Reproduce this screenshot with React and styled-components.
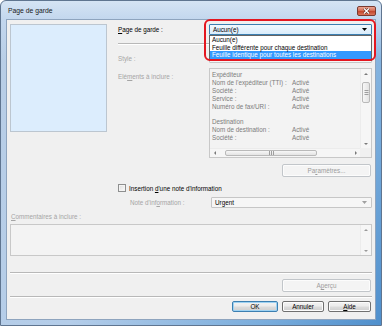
import styled, { createGlobalStyle } from 'styled-components';

const Global = createGlobalStyle`
  html, body { margin: 0; padding: 0; background: #fff; }
  body { font-family: "Liberation Sans", Arial, sans-serif; font-size: 6.3px; color: #000; }
  #root { width: 382px; height: 326px; overflow: hidden; }
`;

const Window = styled.div`
  box-sizing: border-box;
  width: 382px;
  height: 326px;
  display: flex;
  flex-direction: column;
  padding: 0 5px 5px;
  border: 1px solid #5f7590;
  border-radius: 6px 6px 0 0;
  background:
    linear-gradient(180deg, #d5e4f4 0px, #c3d7ee 18px, rgba(190, 212, 236, 0) 60px),
    linear-gradient(120deg, #b9cee6 0%, #b4cde9 45%, #78acdc 80%, #4f8fcc 100%);
`;

const TitleBar = styled.div`
  height: 18px;
  display: flex;
  align-items: center;
  justify-content: space-between;
  padding-left: 2px;
`;

const Title = styled.span`
  font-size: 6.8px;
  color: #1a1a1a;
`;

const CloseBtn = styled.div`
  width: 19px;
  height: 10px;
  margin-top: 2px;
  box-sizing: border-box;
  border: 1px solid #7a3a30;
  border-radius: 2px;
  background: linear-gradient(#eaa593, #d46a52 48%, #c2442c 52%, #d9745a);
  display: flex;
  align-items: center;
  justify-content: center;
`;

const Client = styled.div`
  flex: 1;
  box-sizing: border-box;
  background: #f0f0f0;
  border: 1px solid #8ea4be;
  padding: 4px 3px 0;
  display: flex;
  flex-direction: column;
`;

const Top = styled.div`
  display: grid;
  grid-template-columns: 97px 1fr;
  column-gap: 11px;
  align-items: start;
`;

const Preview = styled.div`
  height: 108px;
  box-sizing: border-box;
  background: #dcedfd;
  border: 1px solid #bcc6d0;
`;

const Form = styled.div`
  display: flex;
  flex-direction: column;
`;

const FieldRow = styled.div`
  display: grid;
  grid-template-columns: ${p => p.$col || 91}px 1fr;
  margin-top: ${p => p.$mt || 0}px;
`;

const Label = styled.span`
  color: ${p => (p.$disabled ? '#a5a5a5' : '#000')};
  padding-top: ${p => p.$pt ?? 2}px;
  padding-left: ${p => p.$pl || 0}px;
  line-height: 7px;
  white-space: nowrap;
`;

const Combo = styled.div`
  position: relative;
  height: 11px;
  box-sizing: border-box;
  display: flex;
  align-items: center;
  justify-content: space-between;
  padding: 0 4px 0 3px;
  border: 1px solid ${p => (p.$open ? '#3c7fb1' : '#c6c6c6')};
  border-radius: 1px;
  background: ${p => (p.$open ? 'linear-gradient(#f1f8fd, #d9ecfb)' : '#f6f6f6')};
  color: ${p => (p.$muted ? '#9a9a9a' : '#000')};
`;

const Popup = styled.ul`
  position: absolute;
  left: -1px;
  right: -1px;
  top: 10px;
  margin: 0;
  padding: 0 0 1px;
  list-style: none;
  background: #fff;
  border: 1px solid #646464;
  z-index: 2;
`;

const Option = styled.li`
  height: 7.7px;
  line-height: 7.7px;
  padding-left: 2px;
  white-space: nowrap;
  background: ${p => (p.$selected ? '#3399ff' : 'transparent')};
  color: ${p => (p.$selected ? '#fff' : '#000')};
`;

const Ring = styled.div`
  position: absolute;
  left: -6px;
  top: -6px;
  width: 172px;
  height: 42px;
  box-sizing: border-box;
  border: 2px solid #e4161f;
  border-radius: 6px;
  z-index: 3;
  pointer-events: none;
`;

const Separator = styled.div`
  height: 0;
  border-top: 1px solid #b8b8b8;
  border-bottom: 1px solid #fff;
  margin-top: ${p => p.$mt || 0}px;
`;

const ListBox = styled.div`
  height: ${p => p.$h}px;
  box-sizing: border-box;
  border: 1px solid #c8c8c8;
  background: #f3f3f3;
  display: grid;
  grid-template-columns: 1fr 11px;
  grid-template-rows: ${p => (p.$hbar ? '1fr 9px' : '1fr')};
  overflow: hidden;
`;

const ListContent = styled.div`
  padding: 2.4px 0 0 2px;
  overflow: hidden;
  color: #7c7c7c;
`;

const ListLine = styled.div`
  display: grid;
  grid-template-columns: 80px auto;
  height: 7.8px;
  line-height: 7.8px;
  white-space: nowrap;
`;

const VBar = styled.div`
  display: flex;
  flex-direction: column;
  background: #f6f6f6;
  border-left: 1px solid #ececec;
`;

const HBar = styled.div`
  display: flex;
  align-items: stretch;
  background: #f6f6f6;
  border-top: 1px solid #ececec;
`;

const ArrowCell = styled.div`
  flex: none;
  ${p => (p.$horizontal ? 'width: 9px;' : 'height: 9px;')}
  display: flex;
  align-items: center;
  justify-content: center;
`;

const Track = styled.div`
  flex: 1;
  display: flex;
  flex-direction: ${p => (p.$horizontal ? 'row' : 'column')};
`;

const Thumb = styled.div`
  flex: none;
  box-sizing: border-box;
  border: 1px solid #b9b9b9;
  border-radius: 2px;
  display: flex;
  align-items: center;
  justify-content: center;
  ${p =>
    p.$horizontal
      ? `margin: 1px 0 1px ${p.$offset}px; width: ${p.$len}px; background: linear-gradient(#f7f7f7, #e3e3e3);`
      : `margin: ${p.$offset}px 1px 0; height: ${p.$len}px; background: linear-gradient(90deg, #f7f7f7, #e3e3e3);`}
`;

const Corner = styled.div`
  background: #f0f0f0;
`;

const ButtonRow = styled.div`
  display: flex;
  justify-content: flex-end;
  gap: ${p => p.$gap || 0}px;
  margin-top: ${p => p.$mt || 0}px;
  padding-right: 1px;
`;

const Button = styled.div`
  width: ${p => p.$w}px;
  height: ${p => p.$h || 11}px;
  box-sizing: border-box;
  display: flex;
  align-items: center;
  justify-content: center;
  border-radius: 2px;
  border: 1px solid ${p => (p.$disabled ? '#c2c6ca' : p.$default ? '#3c7fb1' : '#707070')};
  background: ${p =>
    p.$disabled
      ? '#f4f4f4'
      : 'linear-gradient(#f3f3f3, #ebebeb 48%, #dddddd 52%, #cfcfcf)'};
  box-shadow: ${p => (p.$default ? 'inset 0 0 0 1px #9ed2f2' : 'inset 0 0 0 1px #fcfcfc')};
  color: ${p => (p.$disabled ? '#9c9c9c' : '#000')};
  white-space: nowrap;
`;

const CheckRow = styled.div`
  display: flex;
  align-items: center;
  gap: 3px;
  margin-top: 7px;
  height: 8px;
`;

const CheckBox = styled.span`
  width: 8px;
  height: 8px;
  box-sizing: border-box;
  border: 1px solid #8e8f8f;
  background: linear-gradient(135deg, #dcdcdc, #fdfdfd);
  box-shadow: inset 0 0 0 1px #f4f4f4;
`;

const Section = styled.div`
  margin-top: ${p => p.$mt || 0}px;
`;

const Text = styled.span`
  white-space: nowrap;
`;

const Tri = ({ dir = 'down', color = '#000', w = 5, h = 3 }) => {
  const vertical = dir === 'down' || dir === 'up';
  const W = vertical ? w : h;
  const H = vertical ? h : w;
  const pts = {
    down: `0,0 ${W},0 ${W / 2},${H}`,
    up: `0,${H} ${W},${H} ${W / 2},0`,
    left: `${W},0 ${W},${H} 0,${H / 2}`,
    right: `0,0 0,${H} ${W},${H / 2}`,
  }[dir];
  return (
    <svg width={W} height={H} viewBox={`0 0 ${W} ${H}`}>
      <polygon points={pts} fill={color} />
    </svg>
  );
};

const Grip = ({ horizontal }) =>
  horizontal ? (
    <svg width="5" height="4" viewBox="0 0 5 4">
      <path d="M0.5 0v4M2.5 0v4M4.5 0v4" stroke="#8a8a8a" strokeWidth="0.8" />
    </svg>
  ) : (
    <svg width="5" height="5" viewBox="0 0 5 5">
      <path d="M0.5 0.5h4M0.5 2.5h4M0.5 4.5h4" stroke="#8a8a8a" strokeWidth="0.8" />
    </svg>
  );

const U = styled.u`
  text-decoration: underline;
  text-underline-offset: 1px;
`;

const items = [
  ['Expéditeur', ''],
  ["Nom de l'expéditeur (TTI) :", 'Activé'],
  ['Société :', 'Activé'],
  ['Service :', 'Activé'],
  ['Numéro de fax/URI :', 'Activé'],
  ['', ''],
  ['Destination', ''],
  ['Nom de destination :', 'Activé'],
  ['Société :', 'Activé'],
];

const options = [
  'Aucun(e)',
  'Feuille différente pour chaque destination',
  'Feuille identique pour toutes les destinations',
];

function App() {
  return (
    <>
      <Global />
      <Window>
        <TitleBar>
          <Title>Page de garde</Title>
          <CloseBtn>
            <svg width="7" height="6" viewBox="0 0 7 6">
              <path d="M1 0.5L6 5.5M6 0.5L1 5.5" stroke="#5a2a22" strokeWidth="2.4" />
              <path d="M1 0.5L6 5.5M6 0.5L1 5.5" stroke="#fff" strokeWidth="1.3" />
            </svg>
          </CloseBtn>
        </TitleBar>
        <Client>
          <Top>
            <Preview />
            <Form>
              <FieldRow>
                <Label>
                  <U>P</U>age de garde :
                </Label>
                <Combo $open>
                  <Text>Aucun(e)</Text>
                  <Tri dir="down" />
                  <Popup>
                    {options.map((o, i) => (
                      <Option key={o} $selected={i === 2}>
                        {o}
                      </Option>
                    ))}
                  </Popup>
                  <Ring />
                </Combo>
              </FieldRow>
              <Separator $mt={8} />
              <FieldRow $mt={7}>
                <Label $disabled $pt={3}>
                  Style :
                </Label>
                <Combo $muted>
                  <Text />
                  <Tri dir="down" color="#a0a0a0" />
                </Combo>
              </FieldRow>
              <FieldRow $mt={5}>
                <Label $disabled $pt={5}>
                  Elé<U>m</U>ents à inclure :
                </Label>
                <ListBox $h={90} $hbar>
                  <ListContent>
                    {items.map(([k, v], i) => (
                      <ListLine key={i}>
                        <span>{k}</span>
                        <span>{v}</span>
                      </ListLine>
                    ))}
                  </ListContent>
                  <VBar>
                    <ArrowCell>
                      <Tri dir="up" color="#7a7a7a" w={4} h={2} />
                    </ArrowCell>
                    <Track>
                      <Thumb $offset={4} $len={21}>
                        <Grip />
                      </Thumb>
                    </Track>
                    <ArrowCell>
                      <Tri dir="down" color="#7a7a7a" w={4} h={2} />
                    </ArrowCell>
                  </VBar>
                  <HBar>
                    <ArrowCell $horizontal>
                      <Tri dir="left" color="#7a7a7a" w={4} h={2} />
                    </ArrowCell>
                    <Track $horizontal>
                      <Thumb $horizontal $offset={6} $len={92}>
                        <Grip horizontal />
                      </Thumb>
                    </Track>
                    <ArrowCell $horizontal>
                      <Tri dir="right" color="#7a7a7a" w={4} h={2} />
                    </ArrowCell>
                  </HBar>
                  <Corner />
                </ListBox>
              </FieldRow>
              <ButtonRow $mt={6}>
                <Button $w={89} $h={13} $disabled>
                  Pa<U>r</U>amètres...
                </Button>
              </ButtonRow>
              <CheckRow>
                <CheckBox />
                <Text>
                  Insertion <U>d</U>'une note d'information
                </Text>
              </CheckRow>
              <FieldRow $col={93} $mt={5}>
                <Label $disabled $pl={12} $pt={2}>
                  Note d'inf<U>o</U>rmation :
                </Label>
                <Combo>
                  <Text>Urgent</Text>
                  <Tri dir="down" color="#a0a0a0" />
                </Combo>
              </FieldRow>
            </Form>
          </Top>
          <Section $mt={5}>
            <Label $disabled $pt={0} $pl={1}>
              <U>C</U>ommentaires à inclure :
            </Label>
          </Section>
          <Section $mt={4}>
            <ListBox $h={32}>
              <div />
              <VBar>
                <ArrowCell>
                  <Tri dir="up" color="#9a9a9a" w={4} h={2} />
                </ArrowCell>
                <Track />
                <ArrowCell>
                  <Tri dir="down" color="#9a9a9a" w={4} h={2} />
                </ArrowCell>
              </VBar>
            </ListBox>
          </Section>
          <Separator $mt={16} />
          <ButtonRow $mt={5}>
            <Button $w={89} $h={13} $disabled>
              A<U>p</U>erçu
            </Button>
          </ButtonRow>
          <Separator $mt={4} />
          <ButtonRow $mt={3} $gap={4}>
            <Button $w={46} $default>
              OK
            </Button>
            <Button $w={42}>Annuler</Button>
            <Button $w={43}>
              <U>A</U>ide
            </Button>
          </ButtonRow>
        </Client>
      </Window>
    </>
  );
}

export default App;
